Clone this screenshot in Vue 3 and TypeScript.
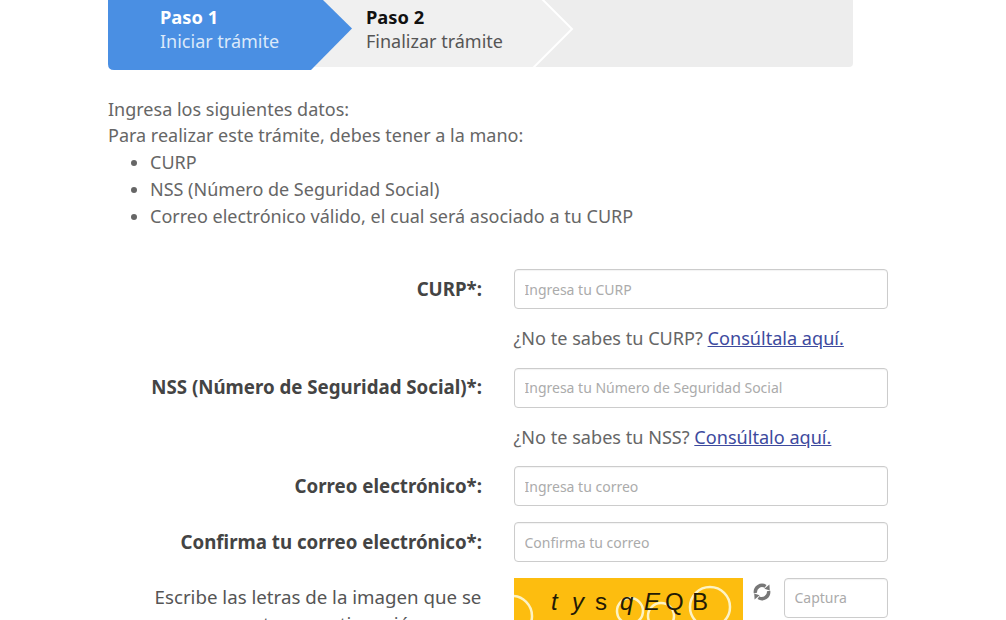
<template>
  <div class="page">
    <div class="steps">
      <div class="step-track">
        <svg class="step-bg" width="745" height="70" viewBox="0 0 745 70">
          <path d="M190 0 H745 V63 Q745 67 741 67 H190 Z" fill="#ededed" />
          <path d="M190 0 H434 L464 29 L425 67 H190 Z" fill="#f0f0f0" />
          <path d="M433 -2 L464 29 L425 68" fill="none" stroke="#fff" stroke-width="2" />
          <path d="M0 0 L215 0 L244 28.5 L203 70 L6 70 Q0 70 0 64 Z" fill="#4a8fe3" />
        </svg>
        <div class="step step-active">
          <strong>Paso 1</strong>
          <span>Iniciar trámite</span>
        </div>
        <div class="step">
          <strong>Paso 2</strong>
          <span>Finalizar trámite</span>
        </div>
      </div>
    </div>

    <div class="intro">
      <p>Ingresa los siguientes datos:</p>
      <p>Para realizar este trámite, debes tener a la mano:</p>
      <ul>
        <li v-for="item in requisitos" :key="item">{{ item }}</li>
      </ul>
    </div>

    <form class="form" @submit.prevent>
      <template v-for="f in fields" :key="f.label">
        <label class="lbl">{{ f.label }}</label>
        <div class="field">
          <input class="inp" :placeholder="f.placeholder" />
          <div v-if="f.help" class="help">{{ f.help }} <a href="#">{{ f.link }}</a></div>
        </div>
      </template>
      <label class="lbl lbl-plain">Escribe las letras de la imagen que se muestra a continuación</label>
      <div class="captcha-row">
        <svg class="captcha" width="229" height="60" viewBox="0 0 229 60">
          <rect width="229" height="60" fill="#fdbd0f" />
          <g fill="none" stroke="#fdf3c4" stroke-width="2.5">
            <circle cx="-2" cy="38" r="20" />
            <circle cx="116" cy="33" r="13" />
            <circle cx="147" cy="38" r="13" />
            <circle cx="196" cy="29" r="20" />
          </g>
          <g class="captcha-text" fill="#231a05">
            <text x="37" y="32" font-style="italic">t</text>
            <text x="58" y="32" font-style="italic">y</text>
            <text x="81" y="32">s</text>
            <text x="106" y="32" font-style="italic">q</text>
            <text x="130" y="32" font-style="italic">E</text>
            <text x="151" y="32">Q</text>
            <text x="178" y="32">B</text>
          </g>
        </svg>
        <svg class="reload" width="20" height="20" viewBox="0 0 20 20" fill="#777" stroke="none">
          <path d="M3.4 11 A6.7 6.7 0 0 1 13.6 4.4" fill="none" stroke="#777" stroke-width="3.4" />
          <path d="M16.6 9 A6.7 6.7 0 0 1 6.4 15.6" fill="none" stroke="#777" stroke-width="3.4" />
          <path d="M12.4 6.8 L17.4 2.6 L17.8 8.4 Z" />
          <path d="M7.6 13.2 L2.6 17.4 L2.2 11.6 Z" />
        </svg>
        <input class="inp inp-captcha" placeholder="Captura" />
      </div>
    </form>
  </div>
</template>

<script setup lang="ts">
type Field = {
  label: string
  placeholder: string
  help?: string
  link?: string
}

const requisitos: string[] = [
  'CURP',
  'NSS (Número de Seguridad Social)',
  'Correo electrónico válido, el cual será asociado a tu CURP',
]

const fields: Field[] = [
  { label: 'CURP*:', placeholder: 'Ingresa tu CURP', help: '¿No te sabes tu CURP?', link: 'Consúltala aquí.' },
  { label: 'NSS (Número de Seguridad Social)*:', placeholder: 'Ingresa tu Número de Seguridad Social', help: '¿No te sabes tu NSS?', link: 'Consúltalo aquí.' },
  { label: 'Correo electrónico*:', placeholder: 'Ingresa tu correo' },
  { label: 'Confirma tu correo electrónico*:', placeholder: 'Confirma tu correo' },
]
</script>

<style>
html, body { margin: 0; height: 620px; overflow: hidden; background: #fff; }
</style>

<style scoped>
.page {
  height: 620px;
  overflow: hidden;
  padding-left: 108px;
  box-sizing: border-box;
  font-family: "Noto Sans", sans-serif;
  font-size: 18px;
  line-height: 26.75px;
  color: #666;
}
.steps { height: 70px; width: 745px; }
.step-track { position: relative; display: flex; height: 70px; }
.step-bg { position: absolute; left: 0; top: 0; }
.step { position: relative; display: flex; flex-direction: column; padding-top: 5px; width: 206px; line-height: 24px; color: #555; }
.step strong { color: #111; font-weight: 700; font-size: 18.3px; }
.step-active { width: 258px; box-sizing: border-box; padding-left: 52px; color: #dbe9fa; }
.step-active strong { color: #fff; }
.intro { margin-top: 25.5px; }
.intro p { margin: 0; }
.intro ul { margin: 0; padding-left: 42px; }
.form {
  display: grid;
  grid-template-columns: 374px 374px;
  column-gap: 31.5px;
  margin-top: 40.2px;
}
.lbl {
  text-align: right;
  font-size: 18.7px;
  font-weight: 700;
  color: #444;
  padding-top: 6.5px;
}
.lbl-plain { font-weight: 400; color: #555; text-align: center; padding-left: 46px; }
.field { margin-bottom: 15.75px; }
.inp {
  display: block;
  width: 100%;
  height: 40px;
  box-sizing: border-box;
  border: 1px solid #ccc;
  border-radius: 4px;
  padding: 0 10px;
  font-family: inherit;
  font-size: 14px;
  background: #fff;
  color: #555;
  box-shadow: inset 0 1px 1px rgba(0, 0, 0, 0.05);
}
.inp::placeholder { color: #ababab; opacity: 1; }
.help { margin-top: 16px; font-size: 18.1px; }
.help a { color: #3d4a9e; text-decoration: underline; }
.captcha-row { display: flex; align-items: flex-start; }
.captcha-text { font-family: "Liberation Sans", sans-serif; font-size: 24px; }
.reload { margin: 4px 12px 0 9px; }
.inp-captcha { width: 104px; }
</style>
